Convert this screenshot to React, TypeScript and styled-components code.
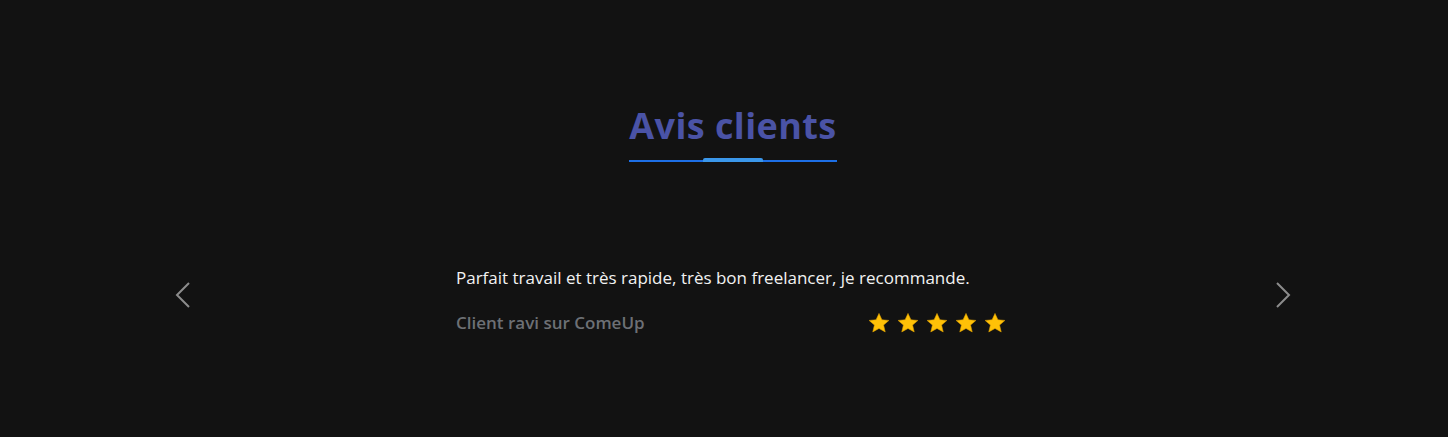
import React from "react";
import styled, { createGlobalStyle } from "styled-components";

const GlobalStyle = createGlobalStyle`
  html, body {
    margin: 0;
    padding: 0;
    background: #121212;
  }
  body {
    font-family: "Open Sans", "Liberation Sans", sans-serif;
  }
`;

const Section = styled.section`
  height: 437px;
  box-sizing: border-box;
  padding: 105px 0 0 18px;
  display: flex;
  flex-direction: column;
  align-items: center;
  background: #121212;
`;

const Heading = styled.h2`
  position: relative;
  margin: 0;
  padding: 0 0 13px;
  font: 700 36px/42px "Open Sans", "Liberation Sans", sans-serif;
  letter-spacing: 0.4px;
  color: #4a53a6;
  border-bottom: 2px solid #1d6fe6;

  &::after {
    content: "";
    position: absolute;
    left: 50%;
    bottom: -2px;
    width: 60px;
    height: 4px;
    margin-left: -30px;
    border-radius: 2px 2px 0 0;
    background: #3b97ea;
  }
`;

const Carousel = styled.div`
  margin-top: 103px;
  width: 1130px;
  display: flex;
  align-items: center;
  justify-content: space-between;
`;

const Arrow = styled.button`
  width: 30px;
  height: 40px;
  margin-bottom: 10px;
  padding: 0;
  border: 0;
  background: none;
  display: flex;
  align-items: center;
  justify-content: center;
  cursor: pointer;
`;

const Slide = styled.div`
  width: 550px;
  margin-right: 4px;
  display: flex;
  flex-direction: column;
  gap: 20px;
`;

const Quote = styled.p`
  margin: 0;
  font: 400 17px/25px "Open Sans", "Liberation Sans", sans-serif;
  color: #f2f2f2;
`;

const Footer = styled.div`
  display: flex;
  align-items: center;
  justify-content: space-between;
`;

const Author = styled.span`
  font: 600 17px/25px "Open Sans", "Liberation Sans", sans-serif;
  color: #6d7075;
`;

const Stars = styled.div`
  display: flex;
  gap: 7px;
`;

const Chevron = ({ dir }: { dir: "left" | "right" }) => (
  <svg width="16" height="26" viewBox="0 0 16 26" fill="none">
    <polyline
      points={dir === "left" ? "14,1 2,13 14,25" : "2,1 14,13 2,25"}
      stroke="#8c8c8c"
      strokeWidth="2"
    />
  </svg>
);

const Star = () => (
  <svg width="22" height="22" viewBox="0 0 24 24">
    <path
      d="M12 1.5l3.2 7 7.6.7-5.8 5.1 1.8 7.5L12 17.9l-6.8 3.9 1.8-7.5-5.8-5.1 7.6-.7z"
      fill="#ffc107"
      stroke="#e0a000"
      strokeWidth="0.6"
      strokeLinejoin="round"
    />
  </svg>
);

export default function App() {
  return (
    <>
      <GlobalStyle />
      <Section>
        <Heading>Avis clients</Heading>
        <Carousel>
          <Arrow aria-label="Précédent">
            <Chevron dir="left" />
          </Arrow>
          <Slide>
            <Quote>
              Parfait travail et très rapide, très bon freelancer, je recommande.
            </Quote>
            <Footer>
              <Author>Client ravi sur ComeUp</Author>
              <Stars>
                {[0, 1, 2, 3, 4].map((i) => (
                  <Star key={i} />
                ))}
              </Stars>
            </Footer>
          </Slide>
          <Arrow aria-label="Suivant">
            <Chevron dir="right" />
          </Arrow>
        </Carousel>
      </Section>
    </>
  );
}
